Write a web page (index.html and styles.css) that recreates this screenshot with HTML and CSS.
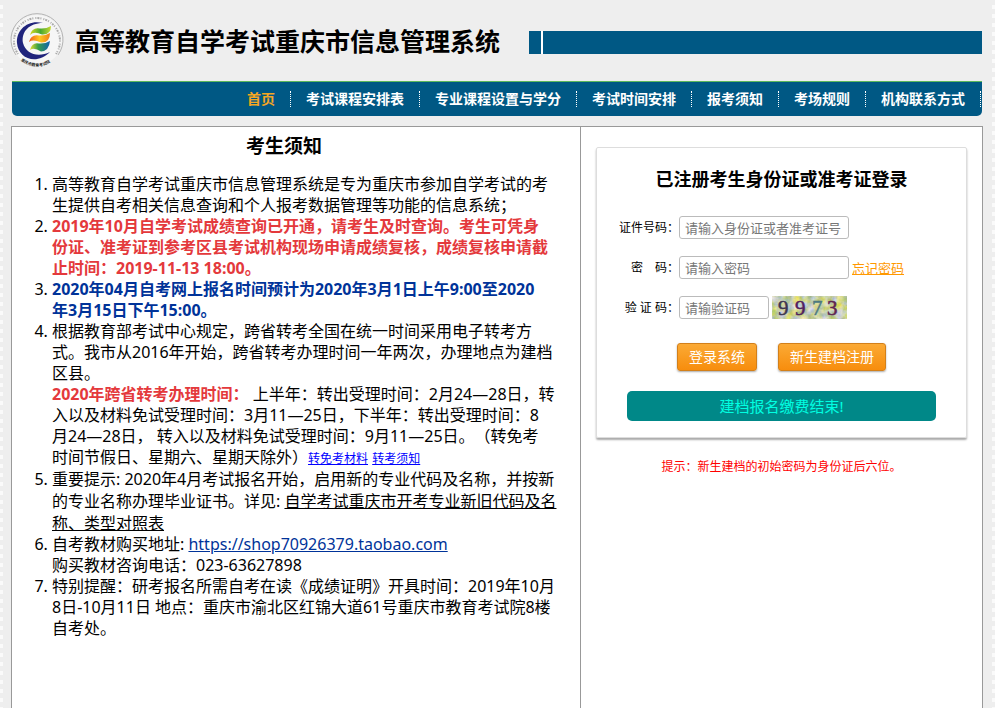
FILE: index.html
```html
<!DOCTYPE html>
<html lang="zh-CN">
<head>
<meta charset="utf-8">
<title>高等教育自学考试重庆市信息管理系统</title>
<link rel="stylesheet" href="styles.css">
</head>
<body>
<div class="page">
  <header class="header">
    <svg class="logo" viewBox="0 0 54 56" aria-hidden="true">
      <defs>
        <path id="ring-bottom" d="M9 46Q27 61 45 46"/>
        <linearGradient id="green"><stop offset="0" stop-color="#d8dc20"/><stop offset=".5" stop-color="#48a830"/><stop offset="1" stop-color="#c8d830"/></linearGradient>
        <linearGradient id="orange"><stop offset="0" stop-color="#f05a18"/><stop offset=".5" stop-color="#ffc820"/><stop offset="1" stop-color="#f08018"/></linearGradient>
        <linearGradient id="blue"><stop offset="0" stop-color="#e8e030"/><stop offset=".4" stop-color="#38a048"/><stop offset="1" stop-color="#1060b0"/></linearGradient>
      </defs>
      <circle cx="27" cy="27" r="25" fill="#f6f6f6"/>
      <path d="M6 42A26 26 0 1 1 48 42" fill="none" stroke="#b4b4b4" stroke-width="1"/>
      <path d="M8 41A23 23 0 1 1 46 41" fill="none" stroke="#aaa" stroke-width="2" stroke-dasharray="1 1 2 1 1 2"/>
      <text class="ring-name"><textPath href="#ring-bottom" startOffset="2">重庆市教育考试院</textPath></text>
      <path d="M33 10C18 6 6 17 7 30C8 45 26 53 40 39C28 45 16 41 13 30C11 19 19 10 33 10Z" fill="#20247c"/>
      <path d="M20 22Q22 14 30 15.500Q36 16 41 13Q41 22 32 21.500Q24 18 20 22Z" fill="url(#green)"/>
      <path d="M19 29Q21 21 29 22.500Q35 23 40 20Q40 30 31 29.500Q23 26 19 29Z" fill="url(#orange)"/>
      <path d="M20 37Q22 29 29 30.500Q35 31 40 28Q39 38 31 38.500Q24 34 20 37Z" fill="url(#blue)"/>
    </svg>
    <h1 class="title">高等教育自学考试重庆市信息管理系统</h1>
    <div class="band"><span class="band-start"></span><span class="band-rest"></span></div>
  </header>

  <nav class="nav">
    <a class="nav-link active" href="#">首页</a>
    <a class="nav-link" href="#">考试课程安排表</a>
    <a class="nav-link" href="#">专业课程设置与学分</a>
    <a class="nav-link" href="#">考试时间安排</a>
    <a class="nav-link" href="#">报考须知</a>
    <a class="nav-link" href="#">考场规则</a>
    <a class="nav-link" href="#">机构联系方式</a>
  </nav>

  <main class="main">
    <section class="notice">
      <h2 class="notice-title">考生须知</h2>
      <ol class="rules">
        <li>高等教育自学考试重庆市信息管理系统是专为重庆市参加自学考试的考<br>生提供自考相关信息查询和个人报考数据管理等功能的信息系统；</li>
        <li><strong class="red">2019年10月自学考试成绩查询已开通，请考生及时查询。考生可凭身<br>份证、准考证到参考区县考试机构现场申请成绩复核，成绩复核申请截<br>止时间：2019-11-13 18:00。</strong></li>
        <li><strong class="blue">2020年04月自考网上报名时间预计为2020年3月1日上午9:00至2020<br>年3月15日下午15:00。</strong></li>
        <li>根据教育部考试中心规定，跨省转考全国在统一时间采用电子转考方<br>式。我市从2016年开始，跨省转考办理时间一年两次，办理地点为建档<br>区县。<br><strong class="red">2020年跨省转考办理时间：</strong> 上半年：转出受理时间：2月24—28日，转<br>入以及材料免试受理时间：3月11—25日，下半年：转出受理时间：8<br>月24—28日， 转入以及材料免试受理时间：9月11—25日。（转免考<br>时间节假日、星期六、星期天除外）<a class="small-link" href="#">转免考材料</a> <a class="small-link" href="#">转考须知</a></li>
        <li>重要提示: 2020年4月考试报名开始，启用新的专业代码及名称，并按新<br>的专业名称办理毕业证书。详见: <a class="doc-link" href="#">自学考试重庆市开考专业新旧代码及名<br>称、类型对照表</a></li>
        <li>自考教材购买地址: <a class="shop-link" href="#">https://shop70926379.taobao.com</a><br>购买教材咨询电话：023-63627898</li>
        <li>特别提醒：研考报名所需自考在读《成绩证明》开具时间：2019年10月<br>8日-10月11日 地点：重庆市渝北区红锦大道61号重庆市教育考试院8楼<br>自考处。</li>
      </ol>
    </section>

    <section class="side">
      <form class="card">
        <h2 class="card-title">已注册考生身份证或准考证登录</h2>
        <div class="row">
          <label class="label" for="idno">证件号码：</label>
          <input class="field" id="idno" type="text" placeholder="请输入身份证或者准考证号">
        </div>
        <div class="row">
          <label class="label" for="pwd">密　码：</label>
          <input class="field" id="pwd" type="password" placeholder="请输入密码">
          <a class="forgot" href="#">忘记密码</a>
        </div>
        <div class="row">
          <label class="label" for="code">验 证 码：</label>
          <input class="field short" id="code" type="text" placeholder="请输验证码">
          <svg class="captcha" viewBox="0 0 75 23" role="img" aria-label="验证码">
            <defs>
              <filter id="grain" x="0" y="0" width="100%" height="100%" color-interpolation-filters="sRGB">
                <feTurbulence type="fractalNoise" baseFrequency=".14" numOctaves="3" seed="4"/>
                <feColorMatrix values=".5 0 0 0 .54 .3 .1 0 0 .62 0 0 .9 0 .2 0 0 0 0 1"/>
              </filter>
            </defs>
            <rect width="75" height="23" filter="url(#grain)"/>
            <text x="6" y="19" fill="#3d3550" stroke="#3d3550">9</text>
            <text x="23" y="19" fill="#51205e" stroke="#51205e">9</text>
            <text x="40" y="19" fill="#4d7980" stroke="#4d7980">7</text>
            <text x="55" y="19" fill="#602450" stroke="#602450">3</text>
          </svg>
        </div>
        <div class="buttons">
          <button class="btn" type="button">登录系统</button>
          <button class="btn" type="button">新生建档注册</button>
        </div>
        <div class="status">建档报名缴费结束!</div>
      </form>
      <p class="hint">提示：新生建档的初始密码为身份证后六位。</p>
    </section>
  </main>
</div>
</body>
</html>
```
FILE: styles.css
```css
* {
  box-sizing: border-box;
}

body {
  margin: 0;
  padding: 0 13px 0 12px;
  background: #eee;
  color: #000;
  font: 14px/20px "Noto Sans", "Noto Sans CJK SC", sans-serif;
  text-spacing-trim: space-all;
}

/* dotted strips along both window edges */
body::before,
body::after {
  content: "";
  position: fixed;
  top: 0;
  bottom: 0;
  left: 0;
  width: 3px;
  background: linear-gradient(#fafafa 4px, #eee 4px) 0 5px / 3px 9px;
}

body::after {
  left: auto;
  right: 0;
}

.page {
  display: flex;
  flex-direction: column;
  min-height: 100vh;
}

.header {
  display: flex;
  align-items: center;
  height: 81px;
}

.logo {
  width: 54px;
  height: 56px;
  margin-left: -2px;
}

.ring-name {
  fill: #222;
  font: bold 4px "Noto Sans CJK SC", sans-serif;
}

.title {
  margin: 0 29px 0 11px;
  font-size: 25px;
  font-weight: bold;
  line-height: 36px;
  white-space: nowrap;
}

.band {
  display: flex;
  flex: 1;
  gap: 2px;
  height: 23px;
  margin-top: 4px;
  background: #fff;
}

.band-start {
  width: 12px;
  background: #005884;
}

.band-rest {
  flex: 1;
  background: #005884;
}

.nav {
  display: flex;
  justify-content: flex-end;
  align-items: center;
  height: 35px;
  padding-right: 1px;
  border-top: 1px solid #5cb85c;
  border-radius: 0 0 5px 5px;
  background: #005884;
}

.nav-link {
  padding: 0 15px;
  border-right: 1px dotted #fff;
  color: #fff;
  font-weight: bold;
  line-height: 16px;
  text-decoration: none;
  white-space: nowrap;
}

.nav-link.active {
  color: #f5a623;
}

.main {
  display: grid;
  grid-template-columns: minmax(0, 569fr) minmax(0, 401fr);
  flex: 1;
  margin: 10px -1px 0;
  border: 1px solid #999;
  border-bottom: 0;
  background: #fff;
}

.notice {
  padding: 0 24px 0 40px;
  border-right: 1px solid #999;
}

.notice-title {
  margin: 7px 40px 0 0;
  font-size: 19px;
  line-height: 24px;
  text-align: center;
}

.rules {
  margin: 16px 0 0;
  padding: 0;
  font-size: 16px;
  line-height: 21px;
  white-space: nowrap;
}

.red {
  color: #e4393c;
}

.blue {
  color: #003399;
}

.small-link {
  color: #00f;
  font-size: 12px;
}

.doc-link {
  color: #000;
  line-height: 22px;
}

.shop-link {
  color: #003399;
}

.side {
  padding: 20px 15px;
}

.card {
  display: flex;
  flex-direction: column;
  padding: 19px 30px 16px;
  border: 1px solid #ddd;
  border-radius: 2px;
  box-shadow: 0 2px 2px #aaa;
}

.card-title {
  margin: 0 0 25px;
  font-size: 18px;
  line-height: 24px;
  text-align: center;
}

.row {
  display: flex;
  align-items: center;
  height: 23px;
  margin: 0 -18px 17px;
}

.label {
  width: 70px;
  font-size: 12px;
  text-align: right;
  white-space: nowrap;
}

.field {
  width: 170px;
  height: 23px;
  padding: 0 5px;
  border: 1px solid #bbb;
  border-radius: 3px;
  background: #fff;
  font: 13px "Noto Sans", "Noto Sans CJK SC", sans-serif;
}

.field.short {
  width: 90px;
}

.field::placeholder {
  color: #777;
}

.forgot,
.captcha {
  margin-left: 3px;
}

.forgot {
  color: #f90;
  font-size: 13px;
}

.captcha {
  width: 75px;
  height: 23px;
  font: 21px "Liberation Serif", serif;
  stroke-width: .5px;
}

.buttons {
  display: flex;
  justify-content: center;
  gap: 21px;
  margin: 7px 0 20px;
}

.btn {
  height: 28px;
  padding: 0 11px;
  border: 1px solid #d3801a;
  border-radius: 3px;
  background: linear-gradient(#fbaa35, #f78d0d);
  box-shadow: 0 1px 2px #aaa;
  color: #fff;
  font: 14px/20px "Noto Sans", "Noto Sans CJK SC", sans-serif;
}

.status {
  border-radius: 5px;
  background: #008888;
  color: #00ffe1;
  font-size: 15px;
  line-height: 30px;
  text-align: center;
}

.hint {
  margin: 19px 0 0;
  color: #f00;
  font-size: 12px;
  text-align: center;
}
```
